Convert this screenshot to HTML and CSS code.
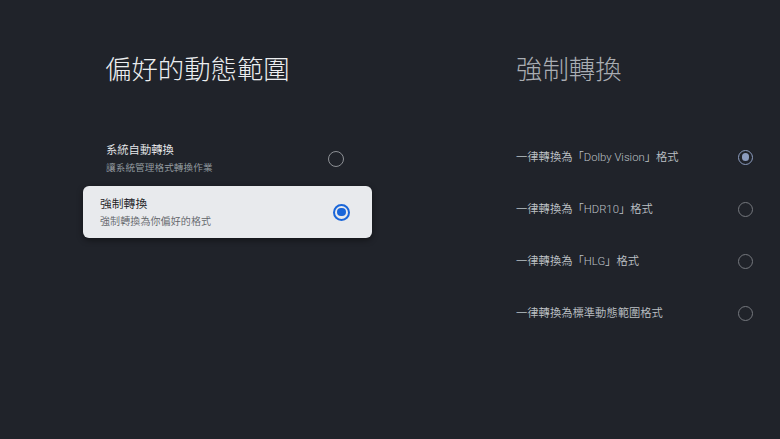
FILE: index.html
```html
<!DOCTYPE html>
<html lang="zh-Hant">
<head>
<meta charset="utf-8">
<link rel="stylesheet" href="styles.css">
</head>
<body>
<div class="screen">
  <section class="pane pane-left">
    <h1 class="title">偏好的動態範圍</h1>
    <ul class="list">
      <li class="item">
        <div class="text">
          <div class="label">系統自動轉換</div>
          <div class="sub">讓系統管理格式轉換作業</div>
        </div>
        <span class="radio"></span>
      </li>
      <li class="item focused">
        <div class="text">
          <div class="label">強制轉換</div>
          <div class="sub">強制轉換為你偏好的格式</div>
        </div>
        <span class="radio checked"></span>
      </li>
    </ul>
  </section>
  <section class="pane pane-right">
    <h1 class="title">強制轉換</h1>
    <ul class="list">
      <li class="item"><div class="label">一律轉換為「Dolby Vision」格式</div><span class="radio checked"></span></li>
      <li class="item"><div class="label">一律轉換為「HDR10」格式</div><span class="radio"></span></li>
      <li class="item"><div class="label">一律轉換為「HLG」格式</div><span class="radio"></span></li>
      <li class="item"><div class="label">一律轉換為標準動態範圍格式</div><span class="radio"></span></li>
    </ul>
  </section>
</div>
</body>
</html>
```

FILE: styles.css
```css
* { box-sizing: border-box; }
html, body {
  margin: 0;
  padding: 0;
  width: 780px;
  height: 439px;
  background: #20232a;
  overflow: hidden;
  font-family: "Roboto", "Noto Sans CJK TC", sans-serif;
}
.screen {
  display: flex;
  height: 100%;
}
.title {
  margin: 0;
  font-weight: 300;
  font-size: 26.4px;
  line-height: 30px;
  font-family: "Noto Sans CJK TC", sans-serif;
}
.list {
  list-style: none;
  margin: 0;
  padding: 0;
}
.pane-left {
  width: 289px;
  margin-left: 83px;
  padding-top: 53px;
}
.pane-left .title {
  color: #eceef0;
  padding-left: 22px;
}
.pane-left .list {
  margin-top: 51px;
  padding: 0 6px;
}
.pane-left .item {
  height: 52px;
  display: flex;
  align-items: center;
  justify-content: space-between;
  padding: 0 22px 0 17px;
  border-radius: 6px;
}
.pane-left .text {
  display: flex;
  flex-direction: column;
  gap: 3px;
}
.pane-left .label {
  font-size: 11.3px;
  line-height: 15px;
  font-weight: 350;
  color: #e8eaed;
}
.pane-left .sub {
  font-size: 9.6px;
  line-height: 13px;
  font-weight: 350;
  color: #9aa0a6;
  letter-spacing: 0.1px;
}
.pane-left .item:first-child .text { margin-top: -4px; }
.pane-left .item.focused {
  margin: 0 -6px;
  background: #e8eaed;
  box-shadow: 0 2px 6px rgba(0, 0, 0, 0.45);
  padding: 0 22px 0 17px;
}
.pane-left .item.focused .label {
  color: #202124;
  font-size: 11.8px;
}
.pane-left .item.focused .sub {
  color: #5f6368;
  font-size: 10px;
}
.radio {
  width: 16px;
  height: 16px;
  border-radius: 50%;
  border: 1.6px solid #8d9095;
  flex: none;
  display: flex;
  align-items: center;
  justify-content: center;
}
.pane-left .radio { margin-top: -2px; }
.pane-left .item.focused .radio { margin-top: 0; }
.pane-left .radio.checked {
  border: 2px solid #1a66d9;
  width: 17px;
  height: 17px;
}
.pane-left .radio.checked::after {
  content: "";
  width: 8.5px;
  height: 8.5px;
  border-radius: 50%;
  background: #1a66d9;
}
.pane-right {
  margin-left: 144px;
  width: 237px;
  padding-top: 53px;
}
.pane-right .title {
  color: #a9adb3;
}
.pane-right .list {
  margin-top: 48px;
}
.pane-right .item {
  height: 52px;
  display: flex;
  align-items: center;
  justify-content: space-between;
}
.pane-right .label {
  font-size: 11.3px;
  line-height: 15px;
  font-weight: 350;
  color: #bdc1c6;
}
.pane-right .radio {
  width: 15px;
  height: 15px;
  margin-right: 0;
  border-color: #75787e;
}
.pane-right .radio.checked {
  border: 1.8px solid #8b9cbf;
}
.pane-right .radio.checked::after {
  content: "";
  width: 7.5px;
  height: 7.5px;
  border-radius: 50%;
  background: #8b9cbf;
}
```
